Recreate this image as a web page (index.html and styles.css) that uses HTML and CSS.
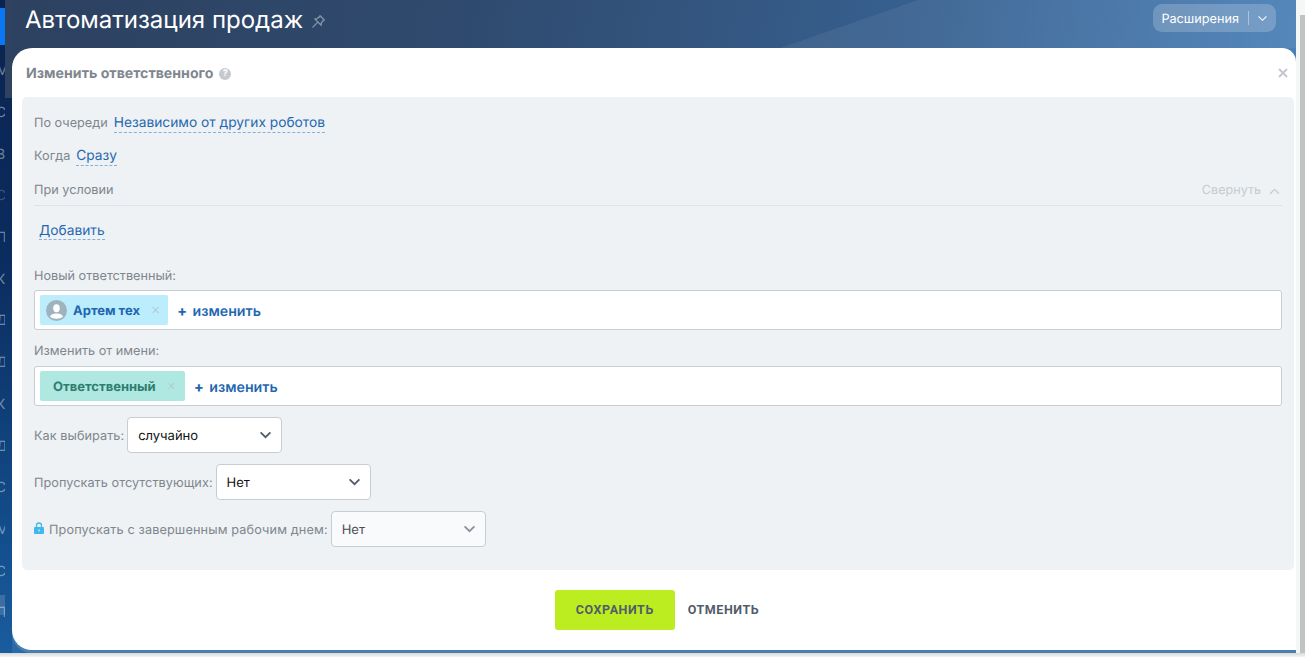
FILE: index.html
```html
<!DOCTYPE html>
<html lang="ru">
<head>
<meta charset="utf-8">
<title>Автоматизация продаж</title>
<link rel="stylesheet" href="styles.css">
</head>
<body>
<div class="app">
  <aside class="rail">
    <span class="rail-active"></span>
    <span class="rail-shade"></span>
    <span class="rail-hover"></span>
    <span class="rail-item">М</span><span class="rail-item">С</span><span class="rail-item">В</span><span class="rail-item rail-dim">С</span><span class="rail-item">П</span><span class="rail-item">К</span><span class="rail-item">Д</span><span class="rail-item">Д</span><span class="rail-item">К</span><span class="rail-item">Д</span><span class="rail-item">С</span><span class="rail-item">М</span><span class="rail-item">С</span><span class="rail-item">П</span>
  </aside>
  <main class="main">
    <header class="top">
      <div class="top-title">
        <h1 class="title">Автоматизация продаж</h1>
        <svg class="pin" viewBox="0 0 16 16" width="15" height="15" fill="none" stroke="#8796ab" stroke-width="1.400" stroke-linejoin="round" stroke-linecap="round"><path d="M9.600 1.800 14.200 6.400 12.900 7 10.900 9.800 10.800 12 4 5.200 6.200 5.100 9 3.100Z"/><path d="M7 8.900 2 14"/></svg>
      </div>
      <div class="ext">
        <span class="ext-label">Расширения</span>
        <span class="ext-sep"></span>
        <svg class="ext-arrow" viewBox="0 0 12 8" width="11" height="7" fill="none" stroke="#fff" stroke-width="1.200"><path d="M1.500 1.500 6 6l4.500-4.500"/></svg>
      </div>
    </header>
    <section class="modal">
      <div class="modal-head">
        <span class="modal-title">Изменить ответственного</span>
        <span class="help">?</span>
        <svg class="close" viewBox="0 0 10 10" width="10" height="10" stroke="#c3c8cd" stroke-width="2"><path d="M1 1l8 8M9 1 1 9"/></svg>
      </div>
      <div class="panel">
        <div class="row row-first"><span class="label">По очереди</span><a class="link">Независимо от других роботов</a></div>
        <div class="row row-when"><span class="label">Когда</span><a class="link">Сразу</a></div>
        <div class="cond">
          <span class="label">При условии</span>
          <span class="collapse">Свернуть
            <svg viewBox="0 0 12 8" width="11" height="7" fill="none" stroke="#c6cbd0" stroke-width="1.500"><path d="M1 6.500 6 1.500l5 5"/></svg>
          </span>
        </div>
        <div class="add"><a class="link">Добавить</a></div>
        <div class="field-label">Новый ответственный:</div>
        <div class="picker">
          <span class="tag tag-user">
            <span class="avatar"><svg viewBox="0 0 21 21" width="21" height="21"><circle cx="10.500" cy="10.500" r="10.500" fill="#9fb3bf"/><ellipse cx="10.500" cy="8.200" rx="3.300" ry="4" fill="#fff"/><path d="M4 16.800c.3-2 3-2.500 4.600-3.200h3.800c1.600.7 4.300 1.200 4.600 3.200-1.500 1.300-3.500 2-6.500 2s-5-.7-6.500-2Z" fill="#fff"/></svg></span>
            <span class="tag-text">Артем тех</span>
            <span class="tag-x">×</span>
          </span>
          <span class="change"><b>+</b> изменить</span>
        </div>
        <div class="field-label field-label-wide">Изменить от имени:</div>
        <div class="picker">
          <span class="tag tag-role">
            <span class="tag-text">Ответственный</span>
            <span class="tag-x">×</span>
          </span>
          <span class="change"><b>+</b> изменить</span>
        </div>
        <div class="sel-row sel-row-first">
          <span class="label">Как выбирать:</span>
          <span class="select"><span class="select-text">случайно</span><svg viewBox="0 0 14 9" width="13" height="8" fill="none" stroke="#535c69" stroke-width="2"><path d="M1.500 1.500 7 7l5.500-5.500"/></svg></span>
        </div>
        <div class="sel-row">
          <span class="label">Пропускать отсутствующих:</span>
          <span class="select"><span class="select-text">Нет</span><svg viewBox="0 0 14 9" width="13" height="8" fill="none" stroke="#535c69" stroke-width="2"><path d="M1.500 1.500 7 7l5.500-5.500"/></svg></span>
        </div>
        <div class="sel-row">
          <svg class="lock" viewBox="0 0 10 12" width="10" height="12"><path d="M2.500 5.500V3.500a2.500 2.500 0 0 1 5 0v2" fill="none" stroke="#3fb8ec" stroke-width="1.300"/><rect y="5" width="10" height="7" rx="1" fill="#3fb8ec"/><rect x="4.500" y="7.500" width="1" height="2" fill="#fff"/></svg>
          <span class="label label-long">Пропускать с завершенным рабочим днем:</span>
          <span class="select select-off"><span class="select-text">Нет</span><svg viewBox="0 0 14 9" width="13" height="8" fill="none" stroke="#8a929c" stroke-width="2"><path d="M1.500 1.500 7 7l5.500-5.500"/></svg></span>
        </div>
      </div>
      <footer class="actions">
        <button class="btn btn-save">СОХРАНИТЬ</button>
        <button class="btn btn-cancel">ОТМЕНИТЬ</button>
      </footer>
    </section>
  </main>
  <div class="gutter"><span class="scroll"></span></div>
</div>
<div class="bottom"></div>
</body>
</html>
```
FILE: styles.css
```css
* { box-sizing: border-box; }
html, body { margin: 0; height: 657px; overflow: hidden; background: #fff; }
body { font-family: Inter, "Noto Sans", sans-serif; color: #535c69; text-rendering: geometricPrecision; }
.app { display: flex; height: 653px; }
.rail {
  position: relative; flex: 0 0 12px; width: 12px; overflow: hidden;
  display: flex; flex-direction: column; padding-top: 50px;
  background: linear-gradient(180deg, #0a2450 0%, #0b2c5e 40%, #14508f 85%, #1a5c9e 100%);
}
.rail-active { position: absolute; left: 0; top: 8px; width: 5px; height: 37px; background: #0a78f5; }
.rail-shade { position: absolute; left: 5px; top: 0; width: 7px; height: 98px; background: #2f4361; }
.rail-hover { position: absolute; left: 0; top: 595px; width: 5px; height: 20px; background: #3d6ea3; }
.rail-item {
  position: relative; flex: 0 0 41.700px; width: 5px; overflow: hidden; display: flex; align-items: center;
  font-size: 14px; color: rgba(255,255,255,.42); white-space: nowrap; text-indent: -4px;
}
.rail-dim { color: rgba(255,255,255,.2); }
.main {
  flex: 0 0 1284px; display: flex; flex-direction: column;
  background: linear-gradient(100deg, #2d4160 0%, #2f4a6e 35%, #37608f 70%, #4a80b8 100%) top / 100% 70px no-repeat, #2a6aa8;
}
.top {
  flex: 0 0 48px; display: flex; align-items: flex-start; justify-content: space-between; padding: 5px 20px 0 13px;
  background: linear-gradient(160.800deg, transparent 298px, rgba(255,255,255,.06) 298px);
}
.top-title { display: flex; align-items: center; gap: 8px; }
.title { margin: 0; font-size: 24px; line-height: 30px; font-weight: 400; color: #fff; }
.pin { margin-top: 2px; }
.ext {
  display: flex; align-items: center; height: 28px; margin-top: -1px; padding: 0 8px;
  border-radius: 9px; background: rgba(255,255,255,.2); color: #fff; font-size: 12.700px;
}
.ext-label { padding-top: 2px; }
.ext-sep { width: 1px; height: 14px; margin: 0 8px 0 9px; background: rgba(255,255,255,.4); }
.modal { flex: 0 0 602px; display: flex; flex-direction: column; background: #fff; border-radius: 20px 14px 0 20px; padding: 0 2px 0 10px; box-shadow: 0 3px 0 #4a80b0; }
.modal-head { flex: 0 0 49px; display: flex; align-items: center; padding: 2px 6px 0 4px; }
.modal-title { font-size: 14.150px; font-weight: 700; color: #80868e; }
.help {
  width: 12px; height: 12px; margin-left: 6px; border-radius: 50%; background: #c6cacf; color: #fff;
  font-size: 9px; font-weight: 700; line-height: 12px; text-align: center;
}
.close { margin: -2px 0 0 auto; }
.panel { flex: 0 0 473px; background: #eef2f4; border-radius: 5px; padding: 0 12px; font-size: 13px; }
.label { color: #80868e; font-size: 12.700px; }
.row { display: flex; align-items: center; gap: 6px; height: 22px; }
.row-first { margin-top: 15px; }
.row-when { margin-top: 11px; }
.link { color: #1f67b0; font-size: 13.750px; line-height: 18px; border-bottom: 1px dashed #7fb0e0; }
.cond { display: flex; justify-content: space-between; align-items: flex-start; height: 28px; margin-top: 11px; border-bottom: 1px solid #dfe3e6; padding: 5px 2px 0 0; line-height: 16px; }
.collapse { display: flex; align-items: center; gap: 8px; color: #c6cbd0; font-size: 12.600px; }
.add { padding: 16px 0 0 5px; height: 49px; }
.field-label { color: #80868e; font-size: 12.700px; line-height: 16px; margin: 14px 0 5px; }
.field-label-wide { margin: 14px 0 6px; }
.picker {
  display: flex; align-items: center; height: 40px; padding: 0 5px; margin-bottom: 12px; background: #fff;
  border: 1px solid #c6cdd3; border-radius: 3px;
}
.tag { display: flex; align-items: center; height: 30px; border-radius: 2px; font-size: 13px; font-weight: 700; }
.tag-text { padding-top: 2px; }
.tag-user { background: #bcedfc; color: #1f67b0; padding: 0 8px 0 6px; }
.tag-role { background: #aee8e0; color: #2e7d70; padding: 0 9px 0 13px; }
.avatar { display: flex; margin-right: 6px; }
.tag-x { margin-left: 11px; color: #b5cdd6; font-size: 14px; font-weight: 400; line-height: 1; }
.change { margin-left: 9px; padding-top: 2px; color: #1f67b0; font-size: 14.200px; font-weight: 600; }
.change b { font-weight: 800; margin-right: 2px; }
.sel-row { display: flex; align-items: center; gap: 3px; height: 36px; margin-bottom: 11px; }
.sel-row-first { margin-top: -1px; }
.sel-row .label { padding-top: 2px; letter-spacing: .05px; }
.sel-row .label-long { letter-spacing: .13px; }
.select {
  display: flex; align-items: center; justify-content: space-between; width: 155px; height: 36px; padding: 0 9px 0 10px;
  background: #fff; border: 1px solid #c6cdd3; border-radius: 4px; color: #111; font-size: 13px;
}
.select-text { padding-top: 2px; }
.select-off { background: #f9fafc; color: #4a4f55; }
.lock { margin-right: 2px; margin-top: -3px; }
.actions { flex: 1; display: flex; align-items: flex-start; justify-content: center; gap: 13px; padding: 20px 2px 0 0; }
.btn { border: 0; padding: 0 0 2px; font-family: Roboto, Inter, sans-serif; font-size: 12.500px; font-weight: 700; letter-spacing: .55px; color: #535c69; }
.btn-save { width: 120px; height: 40px; background: #bbed21; border-radius: 3px; }
.btn-cancel { background: none; height: 40px; }
.gutter { flex: 1; background: #f5f6f6; padding-top: 15px; display: flex; justify-content: flex-end; }
.scroll { display: block; width: 5px; height: 100%; background: #bfc4c3; }
.bottom { height: 4px; background: linear-gradient(#d8d8d8, #f4f4f4); }
```
